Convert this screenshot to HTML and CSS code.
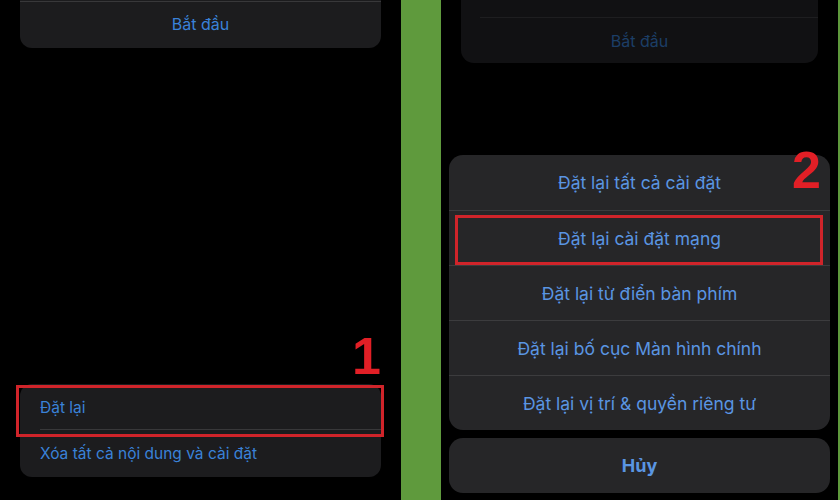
FILE: index.html
```
<!DOCTYPE html>
<html lang="vi">
<head>
<meta charset="utf-8">
<link rel="stylesheet" href="styles.css">
</head>
<body>
<div class="screen">
  <div class="panel left">
    <div class="card top-card">
      <div class="divider-top"></div>
      <div class="start">Bắt đầu</div>
    </div>
    <div class="card bottom-card">
      <div class="row">Đặt lại<div class="mark mark-left"></div></div>
      <div class="row last">Xóa tất cả nội dung và cài đặt</div>
    </div>
    <div class="num num-1">1</div>
  </div>
  <div class="gap"></div>
  <div class="panel right">
    <div class="card dim-card">
      <div class="dim-divider"></div>
      <div class="dim-start">Bắt đầu</div>
    </div>
    <div class="sheet">
      <div class="srow">Đặt lại tất cả cài đặt</div>
      <div class="srow">Đặt lại cài đặt mạng<div class="mark mark-right"></div></div>
      <div class="srow">Đặt lại từ điển bàn phím</div>
      <div class="srow">Đặt lại bố cục Màn hình chính</div>
      <div class="srow">Đặt lại vị trí &amp; quyền riêng tư</div>
    </div>
    <div class="cancel">Hủy</div>
    <div class="num num-2">2</div>
  </div>
  <div class="edge"></div>
</div>
</body>
</html>
```
FILE: styles.css
```
* { box-sizing: border-box; }
html, body { margin: 0; padding: 0; background: #000; }
body { width: 840px; height: 500px; overflow: hidden; font-family: Inter, "Noto Sans", sans-serif; }
.screen { display: flex; width: 840px; height: 500px; }
.panel { position: relative; background: #000; height: 500px; display: flex; flex-direction: column; }
.left { width: 401px; }
.gap { width: 40px; background: #5f9a3d; }
.right { width: 397px; }
.edge { width: 2px; background: #5f9a3d; }

.card { background: #1c1c1e; }
.top-card { margin: 0 20px; height: 48px; border-radius: 0 0 12px 12px; display: flex; flex-direction: column; }
.divider-top { height: 1px; background: #38383a; margin-top: 1px; }
.start { flex: 1; display: flex; align-items: center; justify-content: center; color: #3a82d8; font-size: 16px; padding-bottom: 2px; }

.bottom-card { margin: auto 20px 23px; border-radius: 12px; }
.row { position: relative; height: 46px; display: flex; align-items: center; padding-left: 20px; color: #3a82d8; font-size: 15.5px; }
.row::after { content: ""; position: absolute; left: 20px; right: 0; bottom: 0; height: 1px; background: #38383a; }
.row.last::after { display: none; }
.row.last { height: 47px; }

.mark { position: absolute; border: 3px solid #d0242a; pointer-events: none; }
.mark-left { left: -4px; right: -3px; top: 1px; bottom: -7px; }
.mark-right { left: 6px; right: 7px; top: 4px; bottom: 0; }

.num { position: absolute; color: #e21f26; font-weight: 700; font-family: "Liberation Sans", Arial, sans-serif; line-height: 1; }
.num-1 { right: 20px; top: 330px; font-size: 52px; }
.num-2 { right: 17px; top: 144px; font-size: 52px; }

.dim-card { background: #111113; margin: 0 20px; height: 63px; border-radius: 0 0 13px 13px; display: flex; flex-direction: column; }
.dim-divider { height: 1px; background: #1e1e20; margin: 17px 0 0 19px; }
.dim-start { flex: 1; display: flex; align-items: center; justify-content: center; color: #1c3e66; font-size: 16px; }

.sheet { margin: 92px 8px 0; background: #262628; border-radius: 14px; }
.srow { position: relative; height: 55px; display: flex; align-items: center; justify-content: center; color: #5a95e2; font-size: 17.5px; border-top: 1px solid #3c3c3e; }
.srow:first-child { border-top: 0; }
.cancel { margin: 8px 8px 0; height: 55px; background: #262628; border-radius: 14px; display: flex; align-items: center; justify-content: center; color: #5a95e2; font-size: 18px; font-weight: 700; }
```
